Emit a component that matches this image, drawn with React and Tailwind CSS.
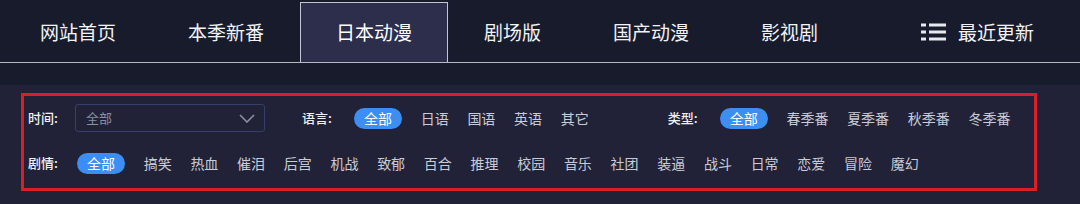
import React from 'react';

const NAV = ['网站首页', '本季新番', '日本动漫', '剧场版', '国产动漫', '影视剧'];
const LANGS = ['全部', '日语', '国语', '英语', '其它'];
const TYPES = ['全部', '春季番', '夏季番', '秋季番', '冬季番'];
const PLOTS = ['全部', '搞笑', '热血', '催泪', '后宫', '机战', '致郁', '百合', '推理', '校园', '音乐', '社团', '装逼', '战斗', '日常', '恋爱', '冒险', '魔幻'];

function ListIcon() {
  return (
    <svg width="25" height="18" viewBox="0 0 25 18" fill="#e8e9ee">
      <rect x="0" y="0.5" width="5" height="3" />
      <rect x="8" y="0.5" width="17" height="3" />
      <rect x="0" y="7.5" width="5" height="3" />
      <rect x="8" y="7.5" width="17" height="3" />
      <rect x="0" y="14.5" width="5" height="3" />
      <rect x="8" y="14.5" width="17" height="3" />
    </svg>
  );
}

// label + pill list, first item is the selected one
function Options({ items }) {
  return (
    <div className="flex items-center gap-[18.7px]">
      {items.map((t, i) =>
        i === 0 ? (
          <span key={i} className="h-[21px] px-[10px] rounded-full bg-[#3c8ef3] text-white text-[14px] leading-[21px]">{t}</span>
        ) : (
          <span key={i} className="text-[14px] text-[#c9ccd6] leading-[21px]">{t}</span>
        )
      )}
    </div>
  );
}

function Label({ children }) {
  return <span className="w-[32px] shrink-0 text-[13px] font-medium text-[#f0f1f5] leading-[20px]">{children}</span>;
}

export default function App() {
  return (
    <div className="w-[1080px] h-[204px] bg-[#212238] font-['Noto_Sans_CJK_SC','Noto_Sans',sans-serif] overflow-hidden">
      {/* top nav */}
      <div className="h-[63px] bg-[#171b2c] border-b border-[#b7bac5] flex items-stretch pt-[2px] pl-[4px]">
        {NAV.map((t, i) =>
          i === 2 ? (
            <div key={t} className="px-[35px] flex items-center text-[19px] text-white bg-[#2c2e4c] border border-b-0 border-[#c3c6d0]">{t}</div>
          ) : (
            <div key={t} className="px-[36px] flex items-center text-[19px] text-[#f2f3f6]">{t}</div>
          )
        )}
        <div className="ml-auto pr-[46px] flex items-center gap-[12px] text-[19px] text-[#f2f3f6]">
          <ListIcon />
          <span>最近更新</span>
        </div>
      </div>
      <div className="h-[22px] bg-[#171b2c]" />

      {/* filter box */}
      <div className="pt-[8px] pl-[21px]">
        <div className="w-[1016px] h-[98px] border-[3px] border-[#d81e27] pl-[4px] pt-[8px]">
          <div className="h-[28px] flex items-center">
            <Label>时间:</Label>
            <div className="ml-[15px] w-[190px] h-[28px] border border-[#35406a] rounded-[3px] flex items-center justify-between pl-[10px] pr-[9px]">
              <span className="text-[13px] text-[#8b8fa0]">全部</span>
              <svg width="16" height="9" viewBox="0 0 16 9" fill="none" stroke="#8b8fa0" strokeWidth="1.6">
                <path d="M1 1l7 7 7-7" />
              </svg>
            </div>
            <div className="ml-[37px] flex items-center">
              <Label>语言:</Label>
              <div className="ml-[20px]"><Options items={LANGS} /></div>
            </div>
            <div className="ml-[79px] flex items-center">
              <Label>类型:</Label>
              <div className="ml-[20px]"><Options items={TYPES} /></div>
            </div>
          </div>
          <div className="mt-[17px] h-[28px] flex items-center">
            <Label>剧情:</Label>
            <div className="ml-[17px]"><Options items={PLOTS} /></div>
          </div>
        </div>
      </div>
    </div>
  );
}
